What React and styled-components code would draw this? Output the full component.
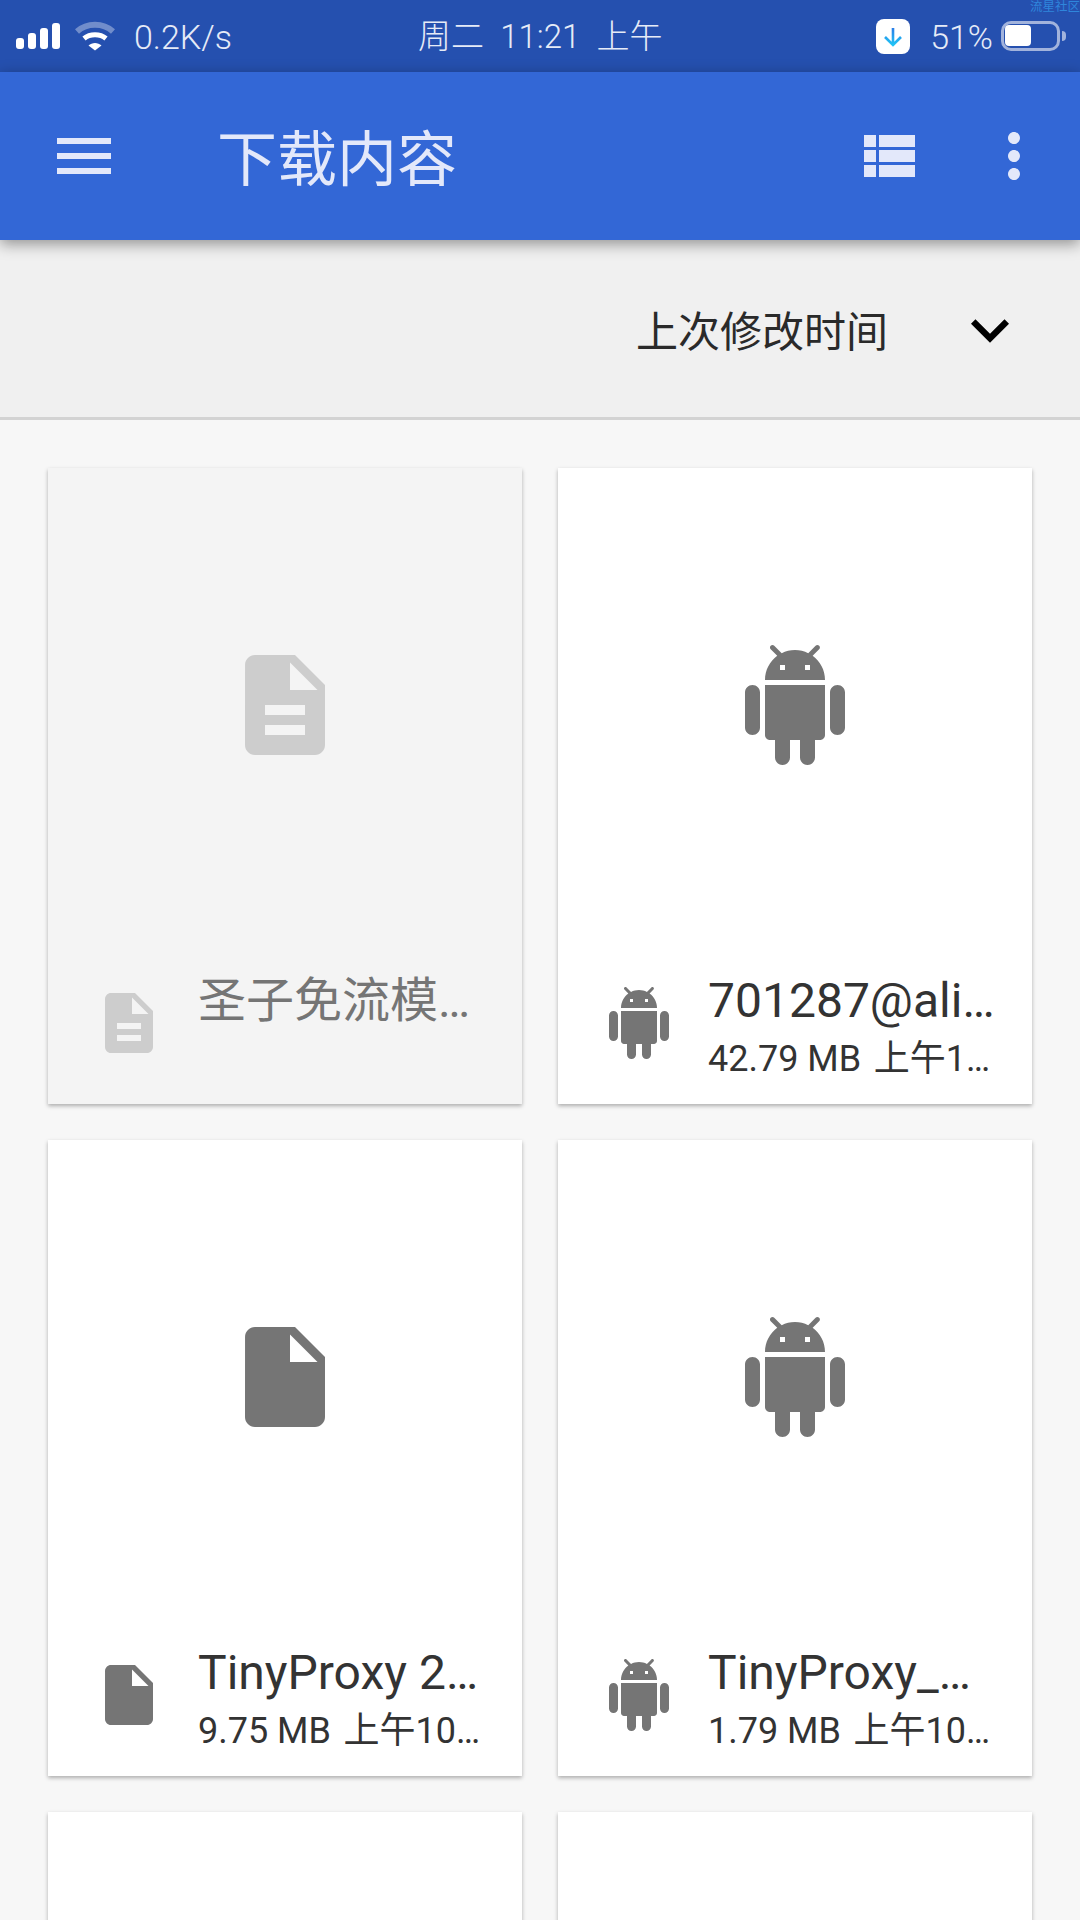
import React from "react";
import styled, { createGlobalStyle } from "styled-components";
import { MdDescription, MdInsertDriveFile, MdKeyboardArrowDown, MdMenu, MdMoreVert } from "react-icons/md";

const FONT = `Roboto, "Noto Sans CJK SC", sans-serif`;

// the older robot, react-icons only has the new head-only one
const AndroidIcon = ({ size }) => (
  <svg viewBox="0 0 24 24" width={size} height={size} fill="currentColor">
    <path d="M6 18c0 .55.45 1 1 1h1v3.5c0 .83.67 1.5 1.5 1.5s1.5-.67 1.5-1.5V19h2v3.5c0 .83.67 1.5 1.5 1.5s1.5-.67 1.5-1.5V19h1c.55 0 1-.45 1-1V8H6v10zM3.5 8C2.67 8 2 8.67 2 9.5v7c0 .83.67 1.5 1.5 1.5S5 17.33 5 16.5v-7C5 8.67 4.33 8 3.5 8zm17 0c-.83 0-1.5.67-1.5 1.5v7c0 .83.67 1.5 1.5 1.5s1.5-.67 1.5-1.5v-7c0-.83-.67-1.5-1.5-1.5zm-4.97-5.84l1.3-1.3c.2-.2.2-.51 0-.71-.2-.2-.51-.2-.71 0l-1.48 1.48C13.85 1.23 12.95 1 12 1c-.96 0-1.86.23-2.66.63L7.85.15c-.2-.2-.51-.2-.71 0-.2.2-.2.51 0 .71l1.31 1.31C6.97 3.26 6 5.01 6 7h12c0-1.99-.97-3.75-2.47-4.84zM10 5H9V4h1v1zm5 0h-1V4h1v1z" />
  </svg>
);

const ViewListIcon = () => (
  <svg viewBox="0 0 24 24" width="72" height="72" fill="currentColor">
    <path d="M4 14h4v-4H4v4zm0 5h4v-4H4v4zM4 9h4V5H4v4zm5 5h12v-4H9v4zm0 5h12v-4H9v4zM9 5v4h12V5H9z" />
  </svg>
);

const files = [
  { icon: MdDescription, name: "圣子免流模…", disabled: true },
  { icon: AndroidIcon, name: "701287@ali…", meta: "42.79 MB \u200a上午1…" },
  { icon: MdInsertDriveFile, name: "TinyProxy 2…", meta: "9.75 MB \u200a上午10…" },
  { icon: AndroidIcon, name: "TinyProxy_…", meta: "1.79 MB \u200a上午10…" },
  { icon: AndroidIcon },
  { icon: AndroidIcon },
];

const App = () => {
  return (
    <Page>
      <GlobalStyle />
      <StatusBar>
        <SignalIcon />
        <WifiIcon />
        <Speed>0.2K/s</Speed>
        <Clock>周二  11:21  上午</Clock>
        <DownloadBadge />
        <BatteryText>51%</BatteryText>
        <Battery>
          <BatteryLevel />
        </Battery>
        <BatteryNub />
        <Watermark>流星社区</Watermark>
      </StatusBar>

      <AppBar>
        <MdMenu size={72} />
        <Title>下载内容</Title>
        <Actions>
          <ViewListIcon />
          <MdMoreVert size={72} />
        </Actions>
      </AppBar>

      <SortBar>
        <SortLabel>上次修改时间</SortLabel>
        <SortArrow>
          <MdKeyboardArrowDown size={76} color="#000" />
        </SortArrow>
      </SortBar>

      <Grid>
        {files.map((file, i) => {
          const Icon = file.icon;
          return (
            <Card key={i} $disabled={file.disabled}>
              <Preview>
                <Icon size={120} />
              </Preview>
              <Footer>
                <Icon size={72} />
                <Labels>
                  <Name $disabled={file.disabled}>{file.name}</Name>
                  <Meta>{file.meta}</Meta>
                </Labels>
              </Footer>
            </Card>
          );
        })}
      </Grid>
    </Page>
  );
};

export default App;

const SignalIcon = () => (
  <SignalSvg viewBox="0 0 44 26" width="44" height="26" fill="#fff">
    <rect x="0" y="15" width="8" height="11" rx="3" />
    <rect x="12" y="10" width="8" height="16" rx="3" />
    <rect x="24" y="5" width="8" height="21" rx="3" />
    <rect x="36" y="0" width="8" height="26" rx="3" />
  </SignalSvg>
);

const WifiIcon = () => (
  <WifiSvg viewBox="0 0 40 30" width="40" height="30" fill="none">
    <path d="M2 10.5C12 1.5 28 1.5 38 10.5" stroke="#fff" strokeOpacity=".35" strokeWidth="6" />
    <path d="M9 17.5C15 12.5 25 12.5 31 17.5" stroke="#fff" strokeWidth="5" />
    <path d="M13.5 24.5C17 21 23 21 26.5 24.5L20 29.5Z" fill="#fff" />
  </WifiSvg>
);

const DownloadBadge = () => (
  <Badge>
    <svg viewBox="0 0 34 35" width="34" height="35" fill="none">
      <defs>
        <linearGradient id="arrow" x1="0" y1="0" x2="0" y2="1">
          <stop offset="0" stopColor="#2a7de8" />
          <stop offset="1" stopColor="#1fc4f5" />
        </linearGradient>
      </defs>
      <path d="M17 9V25.5M9 18L17 26L25 18" stroke="url(#arrow)" strokeWidth="2.6" />
    </svg>
  </Badge>
);

const GlobalStyle = createGlobalStyle`
  body {
    margin: 0;
    background: #f7f7f7;
    font-family: ${FONT};
  }
`;

const Page = styled.div`
  width: 1080px;
  height: 1920px;
  overflow: hidden;
  display: flex;
  flex-direction: column;
  background: #f7f7f7;
`;

const StatusBar = styled.div`
  position: relative;
  flex: none;
  height: 72px;
  box-sizing: border-box;
  padding: 0 14px 0 16px;
  display: flex;
  align-items: center;
  background: #2550af;
  color: #e6ebf7;
  font-size: 34px;
  line-height: 40px;
  font-weight: 300;
`;

const SignalSvg = styled.svg`
  flex: none;
`;

const WifiSvg = styled.svg`
  flex: none;
  margin: 0 0 1px 15px;
`;

const Speed = styled.span`
  margin: 2px 0 0 19px;
`;

const Clock = styled.span`
  margin: 2px 0 0 186px;
  font-size: 33px;
  white-space: pre;
`;

const Badge = styled.div`
  flex: none;
  width: 34px;
  height: 35px;
  margin-left: auto;
  background: #fff;
  border-radius: 8px;
`;

const BatteryText = styled.span`
  margin: 2px 0 0 20px;
`;

const Battery = styled.div`
  flex: none;
  width: 59px;
  height: 30px;
  margin-left: 8px;
  box-sizing: border-box;
  padding: 1px;
  border: 3px solid #a2b3dc;
  border-radius: 10px;
`;

const BatteryLevel = styled.div`
  width: 26px;
  height: 21px;
  background: #fff;
  border-radius: 4px;
`;

const BatteryNub = styled.div`
  flex: none;
  width: 4px;
  height: 10px;
  margin-left: 2px;
  background: #a2b3dc;
  border-radius: 0 5px 5px 0;
`;

const Watermark = styled.div`
  position: absolute;
  top: 0;
  right: 0;
  font-size: 12.5px;
  line-height: 13px;
  font-weight: 400;
  color: #2f86dc;
`;

const AppBar = styled.header`
  position: relative;
  z-index: 2;
  flex: none;
  height: 168px;
  box-sizing: border-box;
  padding: 0 30px 0 48px;
  display: flex;
  align-items: center;
  color: #e3e8fa;
  background: #3367d6;
  box-shadow: 0 4px 14px rgba(0, 0, 0, 0.4);
`;

const Title = styled.h1`
  margin: 0 0 4px 97px;
  font-size: 60px;
  font-weight: 400;
`;

const Actions = styled.div`
  margin-left: auto;
  display: flex;
  gap: 54px;
`;

const SortBar = styled.div`
  flex: none;
  height: 180px;
  box-sizing: border-box;
  padding: 51px 52px 0 0;
  display: flex;
  justify-content: flex-end;
  align-items: flex-start;
  background: #f0f0f0;
  border-bottom: 3px solid #d3d3d3;
`;

const SortLabel = styled.span`
  margin-top: 12px;
  font-size: 42px;
  line-height: 60px;
  color: #2a2a2a;
`;

const SortArrow = styled.div`
  width: 76px;
  height: 76px;
  margin: 1px 0 0 64px;
`;

const Grid = styled.main`
  display: grid;
  grid-template-columns: 474px 474px;
  grid-auto-rows: 636px;
  gap: 36px;
  padding: 48px;
`;

const Card = styled.article`
  display: flex;
  flex-direction: column;
  background: ${(p) => (p.$disabled ? "#f4f4f4" : "#fff")};
  box-shadow: 0 2px 4px rgba(0, 0, 0, 0.3);
  color: ${(p) => (p.$disabled ? "#cdcdcd" : "#757575")};
`;

const Preview = styled.div`
  flex: none;
  height: 474px;
  display: flex;
  align-items: center;
  justify-content: center;
`;

const Footer = styled.div`
  flex: none;
  height: 162px;
  padding-left: 45px;
  display: flex;
  align-items: center;
  gap: 33px;
`;

const Labels = styled.div`
  height: 100px;
`;

const Name = styled.div`
  font-size: 48px;
  line-height: 56px;
  white-space: nowrap;
  color: ${(p) => (p.$disabled ? "#757575" : "#333")};
`;

const Meta = styled.div`
  margin-top: 5px;
  font-size: 36px;
  line-height: 50px;
  white-space: pre;
  color: #333;
`;
